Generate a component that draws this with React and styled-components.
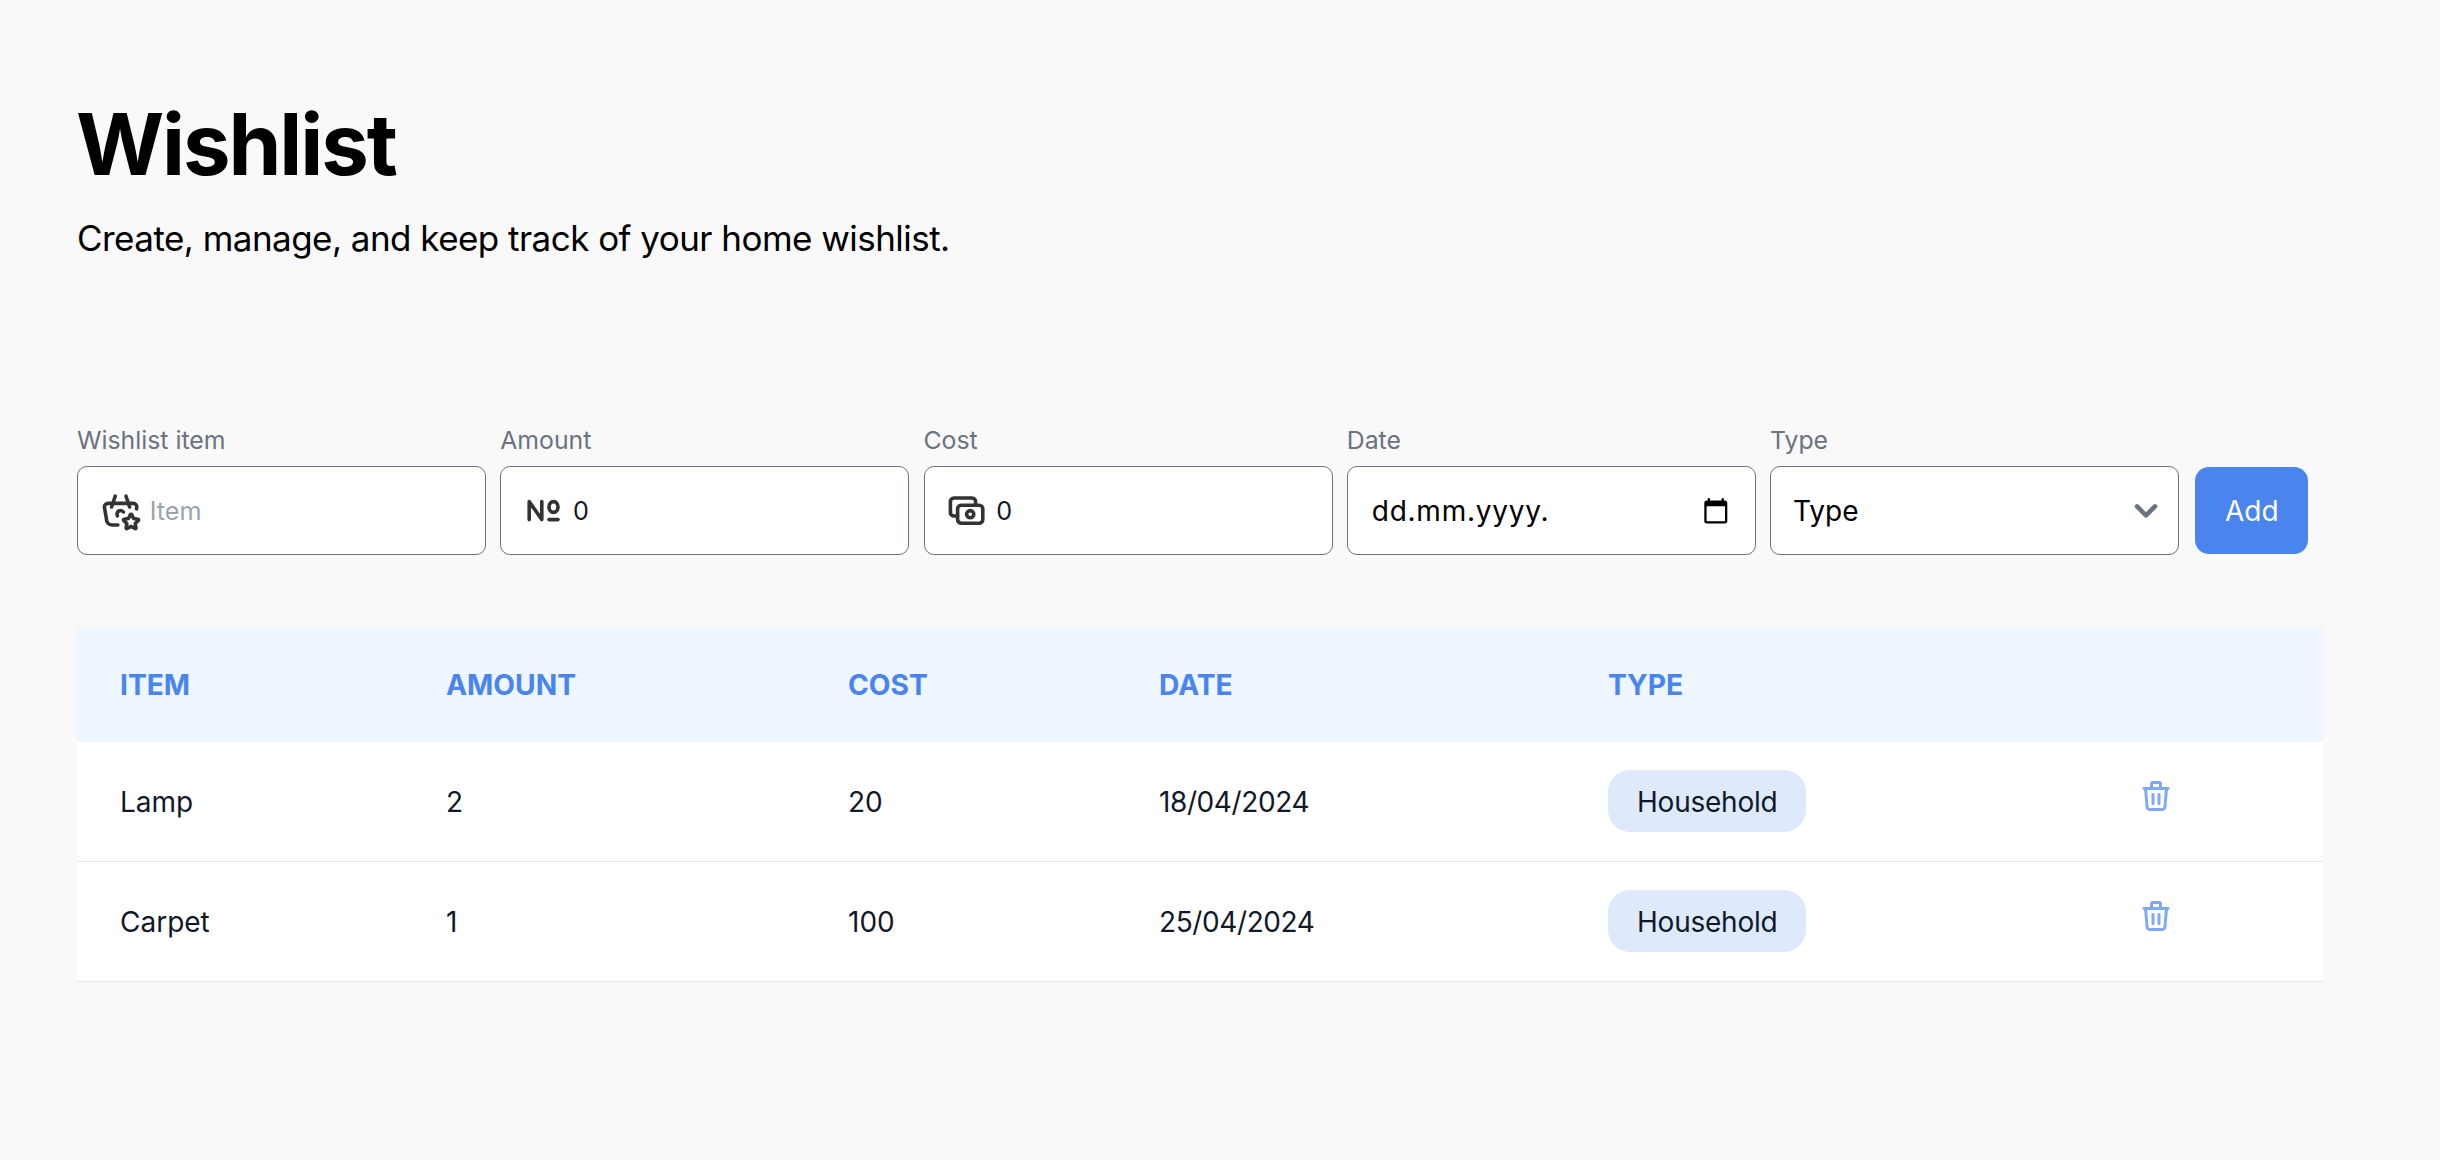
import React from "react";
import styled, { createGlobalStyle } from "styled-components";
import { TbBasketStar, TbNumber, TbCash, TbTrash } from "react-icons/tb";

const GlobalStyle = createGlobalStyle`
  *, *::before, *::after { box-sizing: border-box; }
  body {
    margin: 0;
    min-height: 100vh;
    background: #f9f9f9;
    color: #000;
    font-family: Inter, "Liberation Sans", sans-serif;
    font-weight: 430;
  }
`;

const Page = styled.main`
  display: flex;
  flex-direction: column;
  width: 2323px;
  padding: 100px 0 0 77px;
`;

const Title = styled.h1`
  margin: 0 0 0 -1px;
  font-size: 85px;
  line-height: 90px;
  font-weight: 700;
  letter-spacing: -2.1px;
`;

const Subtitle = styled.p`
  margin: 24px 0 0;
  font-size: 35px;
  line-height: 48px;
  letter-spacing: -0.54px;
`;

const Form = styled.form`
  display: grid;
  grid-template-columns: repeat(5, 409px) 115px;
  column-gap: 14.25px;
  align-items: end;
  margin-top: 161px;
`;

const Field = styled.label`
  display: flex;
  flex-direction: column;
  gap: 9px;
`;

const FieldLabel = styled.span`
  color: #6b7280;
  font-size: 24.8px;
  line-height: 34px;
`;

const Control = styled.span`
  display: flex;
  align-items: center;
  gap: 8px;
  height: 89px;
  padding: 0 ${(p) => p.$right ?? 20}px 0 ${(p) => p.$left ?? 20.5}px;
  border: 1px solid #6b7280;
  border-radius: 10px;
  background: #fff;

  > svg {
    flex: none;
  }
`;

const TextInput = styled.input`
  flex: 1;
  min-width: 0;
  padding: 0;
  border: 0;
  outline: 0;
  background: transparent;
  color: #111827;
  font: 430 25.2px/36px Inter, "Liberation Sans", sans-serif;

  &::placeholder {
    color: #9ca3af;
    opacity: 1;
  }
`;

const ControlText = styled.span`
  flex: 1;
  font-size: 28px;
  line-height: 40px;
  letter-spacing: ${(p) => p.$tracking ?? 0}px;
`;

const AddButton = styled.button`
  width: 113px;
  height: 87px;
  margin: 0 0 1px 2px;
  padding: 0;
  border: 0;
  border-radius: 14px;
  background: #4984ef;
  color: #fff;
  font: 430 28px/40px Inter, "Liberation Sans", sans-serif;
`;

const Table = styled.div`
  display: flex;
  flex-direction: column;
  margin-top: 72px;
`;

const Row = styled.div`
  display: grid;
  grid-template-columns: 327px 402px 311px 449px 529.5px 1fr;
  align-items: center;
  height: 120px;
  border-bottom: 1px solid #e5e7eb;
  background: #fff;
  color: #111827;
  font-size: 28px;
  line-height: 40px;
`;

const HeaderRow = styled(Row)`
  height: 115px;
  border-bottom: 0;
  background: #eef6ff;
  color: #4984ef;
  font-size: 28.2px;
  font-weight: 680;
  text-transform: uppercase;
`;

const Cell = styled.div`
  display: flex;
  align-items: center;
  padding-left: 42px;
  letter-spacing: ${(p) => p.$tracking ?? 0}px;

  &:first-child {
    padding-left: 43px;
  }
`;

const Badge = styled.span`
  margin-bottom: 1px;
  padding: 11.5px 29px 10.5px;
  border-radius: 22px;
  background: #dee9fc;
  letter-spacing: -0.23px;
`;

const DeleteButton = styled.button`
  display: flex;
  padding: 0;
  margin-bottom: 11px;
  border: 0;
  background: transparent;
  color: #7fa9f5;
`;

const CalendarIcon = () => (
  <svg width="27.6" height="27.6" viewBox="0 0 24 24" fill="#000">
    <path d="M20 3h-1V1h-2v2H7V1H5v2H4c-1.1 0-2 .9-2 2v16c0 1.1.9 2 2 2h16c1.1 0 2-.9 2-2V5c0-1.1-.9-2-2-2zm0 18H4V8h16v13z" />
  </svg>
);

const ChevronIcon = () => (
  <svg width="46" height="46" viewBox="0 0 20 20" fill="none" stroke="#6b7280" strokeWidth="2" strokeLinecap="round" strokeLinejoin="round">
    <path d="M6.1 8l3.9 3.9 3.9-3.9" />
  </svg>
);

const columns = ["Item", "Amount", "Cost", "Date", "Type", ""];

const items = [
  { name: "Lamp", amount: 2, cost: 20, date: "18/04/2024", type: "Household" },
  { name: "Carpet", amount: 1, cost: 100, date: "25/04/2024", type: "Household" },
];

export default function App() {
  return (
    <>
      <GlobalStyle />
      <Page>
        <Title>Wishlist</Title>
        <Subtitle>Create, manage, and keep track of your home wishlist.</Subtitle>

        <Form>
          <Field>
            <FieldLabel>Wishlist item</FieldLabel>
            <Control>
              <TbBasketStar size={43.2} color="#333" />
              <TextInput placeholder="Item" />
            </Control>
          </Field>
          <Field>
            <FieldLabel>Amount</FieldLabel>
            <Control>
              <TbNumber size={43.2} color="#333" />
              <TextInput defaultValue="0" />
            </Control>
          </Field>
          <Field>
            <FieldLabel>Cost</FieldLabel>
            <Control>
              <TbCash size={43.2} color="#333" />
              <TextInput defaultValue="0" />
            </Control>
          </Field>
          <Field>
            <FieldLabel>Date</FieldLabel>
            <Control $left={24} $right={25}>
              <ControlText $tracking={0.75}>dd.mm.yyyy.</ControlText>
              <CalendarIcon />
            </Control>
          </Field>
          <Field>
            <FieldLabel>Type</FieldLabel>
            <Control $left={22} $right={9}>
              <ControlText>Type</ControlText>
              <ChevronIcon />
            </Control>
          </Field>
          <AddButton type="button">Add</AddButton>
        </Form>

        <Table>
          <HeaderRow>
            {columns.map((name) => (
              <Cell key={name}>{name}</Cell>
            ))}
          </HeaderRow>
          {items.map((item) => (
            <Row key={item.name}>
              <Cell>{item.name}</Cell>
              <Cell>{item.amount}</Cell>
              <Cell>{item.cost}</Cell>
              <Cell $tracking={-0.4}>{item.date}</Cell>
              <Cell>
                <Badge>{item.type}</Badge>
              </Cell>
              <Cell>
                <DeleteButton type="button" aria-label="Delete">
                  <TbTrash size={36} />
                </DeleteButton>
              </Cell>
            </Row>
          ))}
        </Table>
      </Page>
    </>
  );
}
